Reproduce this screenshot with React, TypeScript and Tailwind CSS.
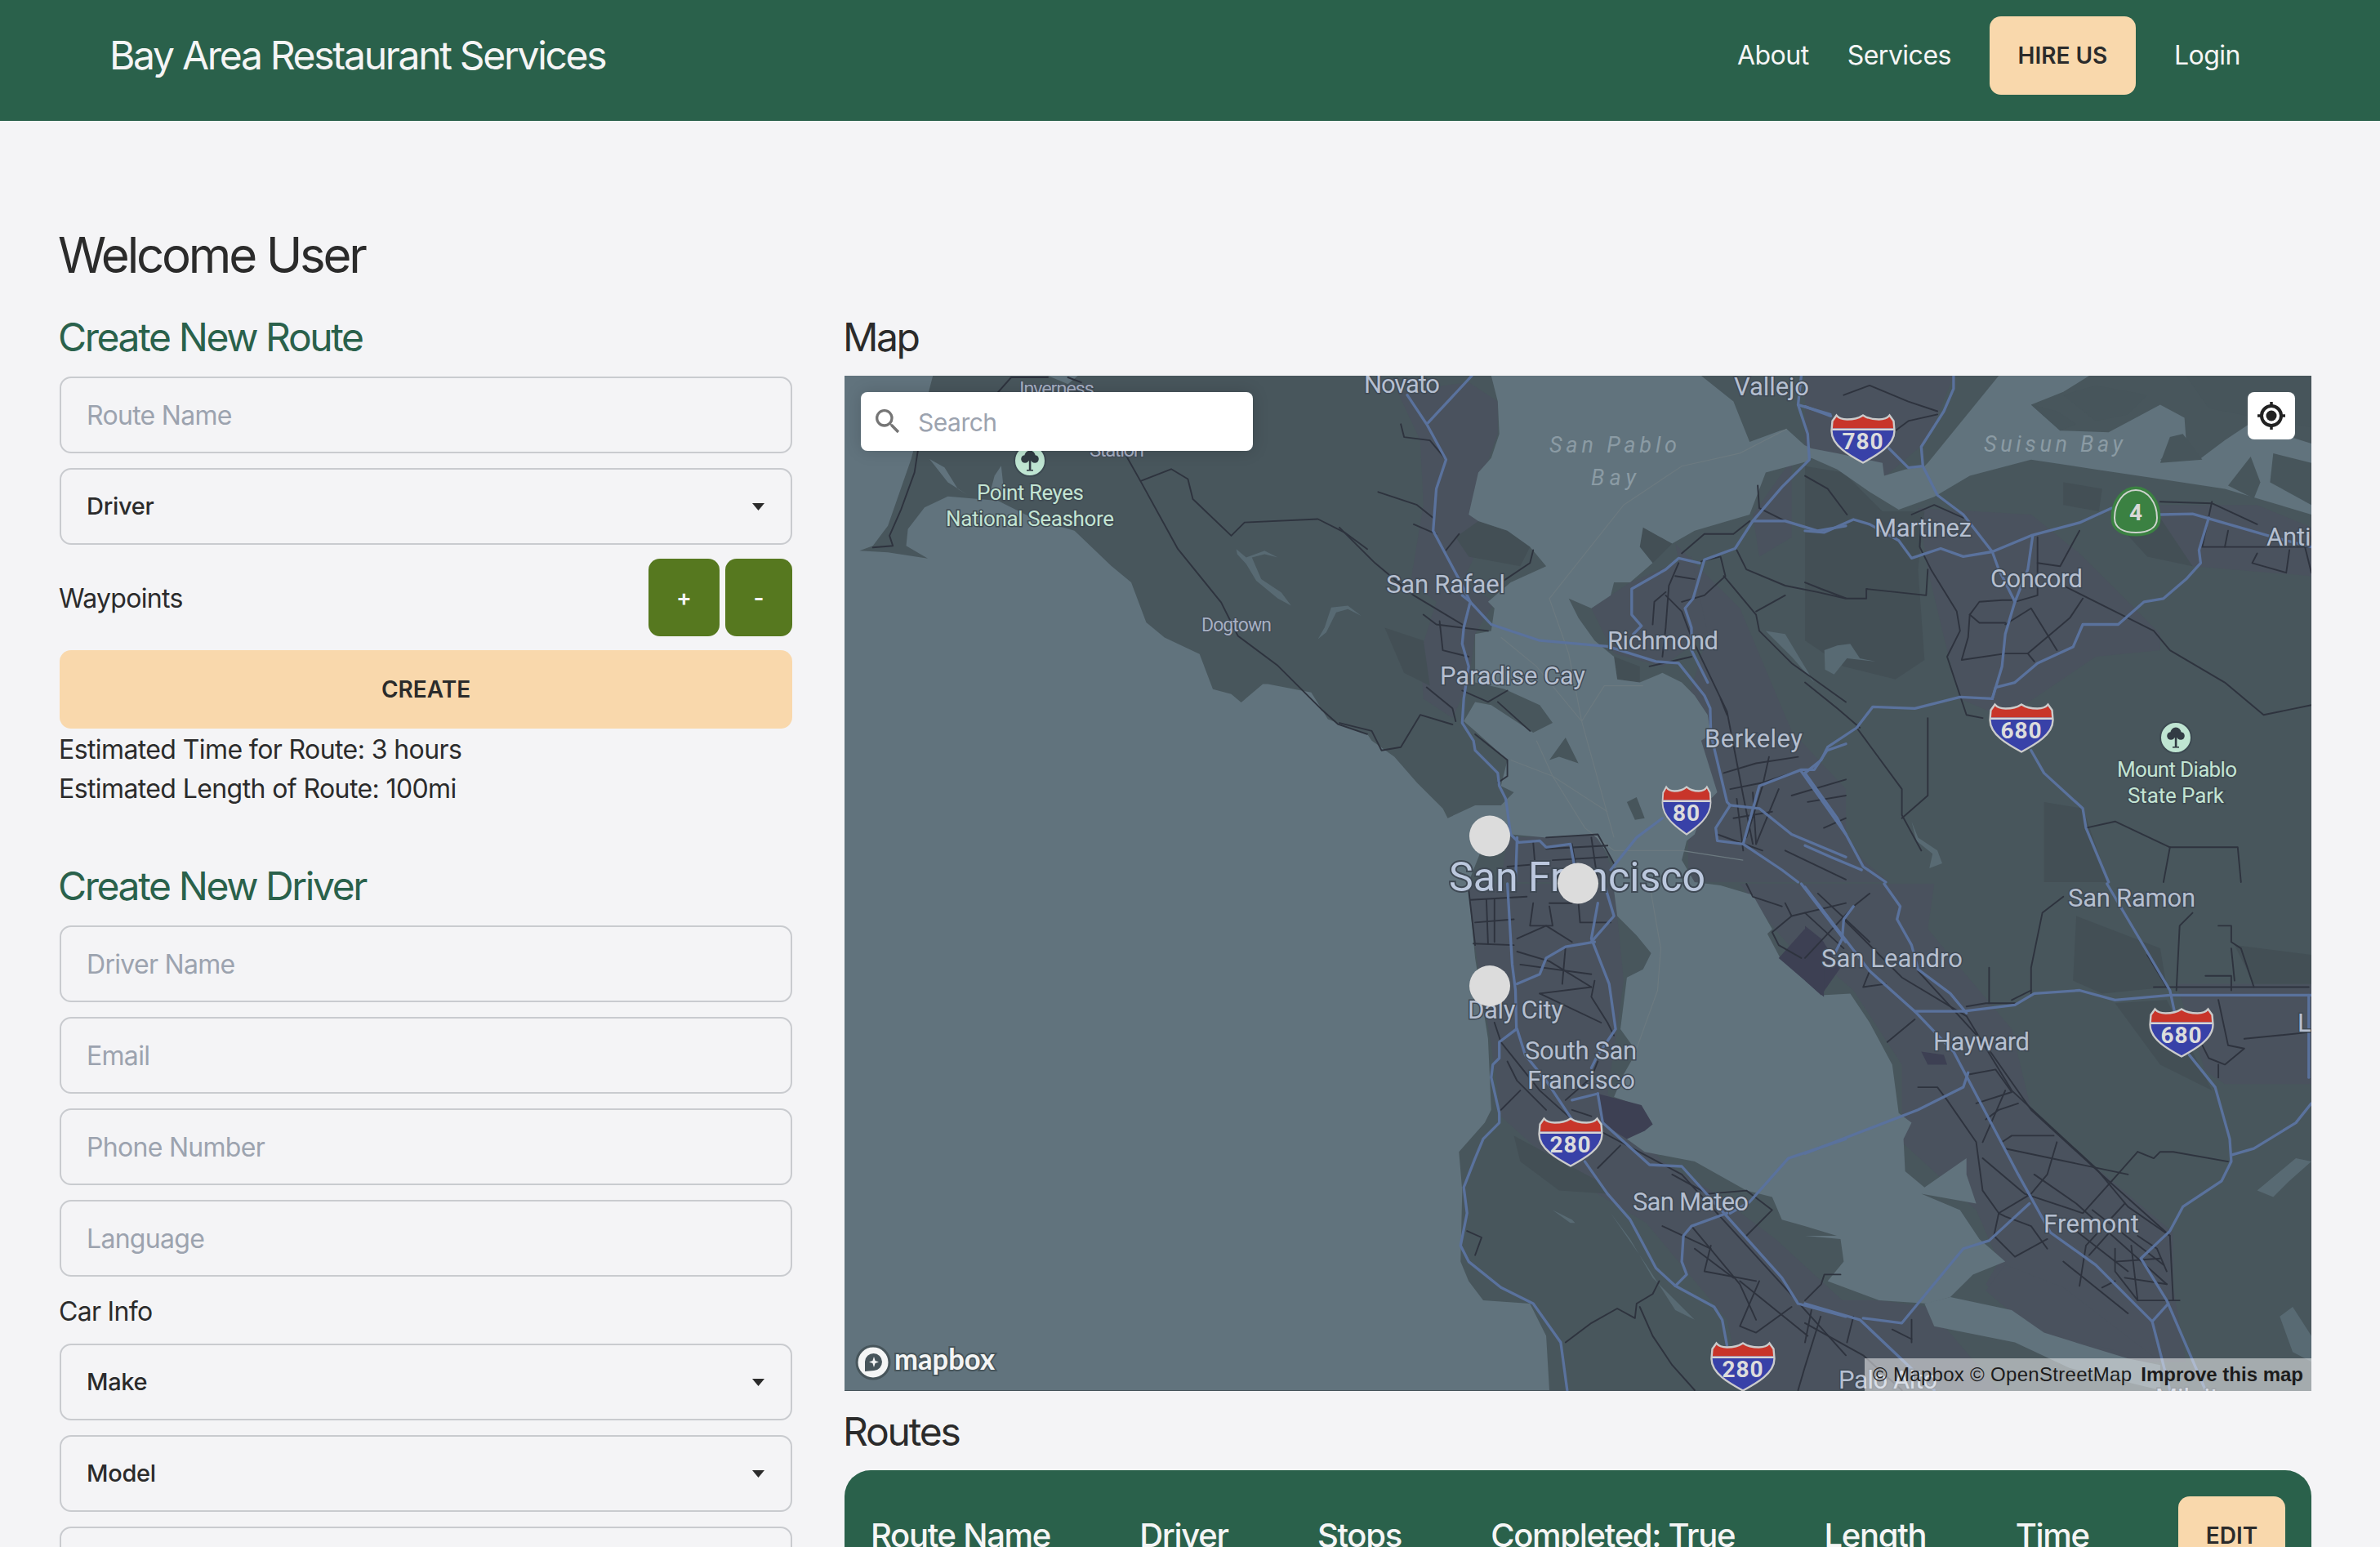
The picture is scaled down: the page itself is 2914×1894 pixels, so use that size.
import React from 'react'

type Pt = [number, number]

// map was traced from square crops, so each crop gets its own origin and scale
const crop = (ox: number, oy: number, s: number) => (n: number[]): Pt[] => {
  const out: Pt[] = []
  for (let i = 0; i < n.length; i += 2) out.push([ox + n[i] * s, oy + n[i + 1] * s])
  return out
}
const Z7 = crop(1034, 460, 640 / 1568)
const Z8 = crop(1640, 460, 620 / 1568)
const Z9 = crop(2210, 460, 620 / 1568)
const Z10 = crop(1640, 1082, 620 / 1568)
const Z11 = crop(2210, 1082, 620 / 1568)

const line = (pts: Pt[]) => 'M' + pts.map((p) => p[0].toFixed(1) + ' ' + p[1].toFixed(1)).join('L')
const shape = (pts: Pt[]) => line(pts) + 'Z'

const waterMain: Pt[] = [
  [1034, 1702],
  [1034, 460],
  ...Z7([265, 0, 200, 250, 130, 450, 85, 510, 45, 525, 130, 530, 250, 548, 185, 510, 190, 460, 240, 395, 310, 362, 460, 375, 570, 430, 690, 465, 800, 570, 860, 620, 905, 740, 960, 785, 1065, 835, 1105, 940, 1160, 955, 1190, 980, 1255, 925, 1270, 925, 1400, 950, 1450, 1030, 1568, 1075]),
  ...Z8([100, 1130, 170, 1180, 240, 1260, 320, 1340, 335, 1370, 420, 1330, 500, 1330, 540, 1290, 500, 1270, 520, 1190, 420, 1100, 385, 1070, 420, 1010, 470, 1020, 600, 1105, 660, 1075, 620, 1020, 510, 970, 420, 950, 420, 800, 470, 790, 480, 720, 460, 700, 530, 640, 640, 590, 590, 530, 520, 480, 430, 450, 400, 430, 430, 300, 470, 255, 495, 180, 490, 80, 470, 0, 1120, 0, 1220, 80, 1270, 205, 1365, 170, 1385, 165, 1440, 215]),
  ...Z9([20, 225, 100, 240, 240, 270, 245, 310, 310, 290, 370, 280, 380, 270, 600, 0, 880, 0, 800, 50, 700, 90, 790, 170, 940, 175, 1100, 90, 1175, 130, 1180, 200, 1100, 260, 1220, 260, 1300, 200, 1375, 150, 1568, 210, 1568, 430, 1300, 350, 1100, 320, 900, 290, 700, 260, 510, 310, 400, 375, 290, 415, 200, 360, 100, 290, 20, 255]),
  ...Z8([1450, 265, 1320, 300, 1270, 430, 1100, 480, 1030, 520, 940, 470, 930, 530, 970, 580, 900, 640, 850, 640, 840, 680, 780, 720, 710, 690, 740, 750, 790, 820, 850, 870, 860, 940, 930, 950, 1000, 920, 1060, 950, 1100, 990, 1140, 1050, 1150, 1110, 1120, 1130, 1170, 1290, 1130, 1330, 1100, 1420, 1075, 1440, 1060, 1500, 1100, 1568]),
  ...Z10([1180, 5, 1280, 35, 1340, 140, 1325, 155, 1365, 230, 1500, 350]),
  ...Z11([50, 345, 140, 340, 200, 430, 270, 560, 290, 710, 330, 740, 305, 790, 310, 890, 370, 940, 500, 850, 500, 900, 530, 990, 360, 960, 480, 1010, 540, 1100, 620, 1170, 520, 1210, 450, 1280, 380, 1300, 230, 1290, 70, 1230, 120, 1170, 110, 1100, 0, 1090]),
  ...Z10([1540, 1090, 1440, 1060, 1370, 1040, 1340, 970, 1260, 950, 1100, 860, 945, 830, 890, 790, 970, 745, 935, 690, 850, 660, 880, 590, 920, 520, 870, 450, 890, 290, 940, 265, 965, 215, 920, 160, 860, 100, 850, 20]),
  ...Z8([850, 1510, 790, 1420, 640, 1430, 530, 1420]),
  [1812, 1045],
  [1800, 1075],
  ...Z10([400, 20, 420, 230, 460, 480, 470, 700, 450, 740, 370, 830, 380, 950, 375, 1170, 400, 1230, 445, 1290, 590, 1300, 640, 1400, 650, 1568]),
]

const urban: Pt[][] = [
  Z8([180, 50, 400, 20, 490, 80, 490, 180, 400, 430, 460, 470, 380, 640, 480, 700, 420, 800, 400, 950, 350, 1060, 260, 1000, 250, 860, 300, 700, 220, 640, 260, 400, 250, 200]),
  Z8([1080, 1000, 1140, 800, 1060, 620, 1040, 520, 1240, 720, 1400, 1100, 1568, 1280, 1568, 1568, 1080, 1568]),
  Z8([900, 640, 1090, 560, 1140, 800, 1000, 900, 850, 860, 780, 720]),
  Z8([1280, 430, 1400, 260, 1400, 500, 1300, 560]),
  Z8([520, 1430, 800, 1420, 860, 1568, 500, 1568]),
  Z9([0, 0, 460, 0, 380, 200, 250, 310, 0, 230]),
  Z9([350, 410, 700, 430, 850, 550, 1100, 800, 1100, 850, 900, 870, 620, 1060, 480, 1000, 440, 850, 380, 600]),
  Z9([1090, 400, 1400, 400, 1568, 470, 1568, 620, 1200, 590, 1100, 460]),
  Z9([0, 1230, 180, 1500, 260, 1568, 0, 1568]),
  Z10([400, 0, 850, 0, 880, 300, 830, 650, 1000, 860, 1150, 950, 1350, 1100, 1568, 1300, 1568, 1568, 1250, 1568, 1200, 1350, 950, 1050, 700, 900, 500, 720, 470, 500, 420, 200]),
  Z10([1240, 0, 1568, 0, 1568, 250, 1400, 200, 1340, 130]),
  Z11([130, 0, 400, 0, 380, 140, 640, 450, 700, 700, 950, 920, 1140, 1080, 1140, 1250, 1180, 1480, 800, 1480, 560, 1240, 600, 1170, 530, 1010, 300, 800, 300, 560, 150, 330, 0, 200, 0, 0]),
  Z11([0, 1290, 230, 1290, 380, 1310, 600, 1568, 0, 1568]),
  Z11([1150, 310, 1568, 310, 1568, 620, 1300, 620, 1240, 580]),
  Z11([560, 1260, 620, 1180, 800, 1250, 1100, 1480, 700, 1380]),
]

// darker hill and park patches
const greens: Pt[][] = [
  Z8([430, 450, 520, 480, 590, 530, 560, 590, 400, 560, 360, 500]),
  Z8([940, 470, 1030, 520, 960, 590, 930, 530]),
  Z8([850, 870, 930, 900, 930, 950, 860, 940]),
  Z8([140, 780, 260, 820, 280, 960, 200, 920]),
  Z9([0, 280, 120, 300, 240, 420, 370, 420, 350, 600, 370, 880, 280, 940, 120, 900, 0, 820]),
  Z9([800, 330, 920, 350, 910, 420, 800, 400]),
  Z9([950, 440, 1100, 440, 1200, 590, 1060, 560]),
  Z11([840, 100, 1100, 200, 1120, 320, 920, 340, 830, 300]),
  Z11([960, 370, 1120, 360, 1260, 640, 1100, 560]),
  Z10([540, 780, 800, 920, 830, 960, 680, 950, 560, 860]),
  Z9([740, 1320, 860, 1340, 940, 1568, 740, 1568]),
  Z11([1330, 190, 1568, 220, 1568, 310, 1390, 310]),
]

const pale: Pt[][] = [
  Z7([1175, 520, 1205, 545, 1260, 525, 1300, 545, 1260, 535, 1222, 545, 1250, 610, 1310, 650, 1340, 690, 1300, 668, 1235, 615, 1205, 565, 1178, 535]),
  Z7([1420, 790, 1440, 755, 1460, 695, 1510, 690, 1550, 720, 1510, 700, 1475, 710, 1445, 770]),
  Z9([60, 850, 100, 835, 140, 830, 170, 875, 220, 885, 130, 875, 90, 925, 62, 910]),
  Z8([1320, 790, 1380, 800, 1470, 950, 1400, 870]),
  Z9([330, 1380, 350, 1430, 410, 1470, 425, 1510, 385, 1525, 395, 1480, 345, 1440]),
  Z10([840, 1020, 900, 1100, 970, 1220, 1100, 1350, 1040, 1320, 950, 1180]),
  Z10([660, 1010, 720, 1040, 730, 1050, 715, 1050]),
  Z11([1400, 950, 1520, 850, 1568, 860, 1500, 920, 1450, 970]),
  Z11([1470, 1340, 1510, 1310, 1568, 1400, 1568, 1480, 1510, 1450]),
]

// estero inlets and the wetland strip south of the bay, same colour as the bay
const inlets: Pt[][] = [
  Z7([255, 250, 300, 275, 340, 340, 370, 358, 310, 320]),
  Z7([470, 270, 450, 300, 438, 345, 480, 362]),
  Z7([610, 0, 670, 25, 700, 0]),
  Z11([370, 1300, 450, 1280, 640, 1320, 740, 1390, 1000, 1470, 1100, 1490, 1100, 1568, 820, 1500, 650, 1420, 400, 1370]),
]

// islands and marshes that sit on top of the water
const islands: Pt[][] = [
  Z8([890, 1320, 920, 1305, 945, 1370, 915, 1375]),
  Z8([650, 1190, 700, 1120, 740, 1200, 680, 1180]),
  Z9([1130, 190, 1170, 180, 1230, 260, 1100, 270]),
  Z9([1310, 340, 1380, 250, 1410, 330, 1390, 380]),
  Z9([1450, 240, 1568, 270, 1568, 400, 1440, 330]),
  Z9([700, 90, 780, 110, 840, 150, 790, 170]),
  Z9([800, 60, 900, 30, 1060, 60, 1000, 120, 900, 140]),
  Z9([1180, 0, 1568, 0, 1568, 160, 1400, 130, 1250, 100]),
]

const airports: Pt[][] = [
  Z10([800, 650, 935, 685, 970, 745, 945, 765, 890, 790, 810, 740]),
  Z11([0, 130, 50, 170, 110, 260, 50, 345, 0, 300]),
  Z10([1360, 230, 1440, 140, 1500, 180, 1500, 350]),
  Z11([360, 520, 430, 530, 440, 560, 380, 560]),
]

const highways: Pt[][] = [
  Z8([410, 0, 275, 145]),
  Z8([210, 60, 270, 150, 330, 260, 300, 350, 290, 480, 370, 630, 405, 700, 385, 780, 380, 830, 400, 900, 385, 1000, 380, 1075, 415, 1130, 420, 1160, 490, 1230, 495, 1270, 515, 1310, 530, 1420, 555, 1445, 620, 1440, 640, 1460, 715, 1450, 730, 1530]),
  Z8([380, 680, 405, 700, 470, 770, 620, 820, 830, 838, 980, 885, 1050, 890, 1130, 990, 1148, 1030, 1150, 1110, 1200, 1320, 1210, 1330]),
  Z8([1210, 1330, 1165, 1400, 1170, 1440, 1250, 1450, 1370, 1530, 1420, 1568]),
  Z8([1430, 0, 1420, 90, 1450, 180, 1455, 260, 1370, 345, 1280, 450, 1225, 535, 1130, 570, 1095, 690, 1070, 720, 1090, 780, 1090, 850, 1140, 950]),
  Z8([1420, 90, 1520, 120]),
  Z8([910, 800, 935, 775, 905, 740, 905, 660, 1010, 600, 1050, 565, 1115, 580]),
  Z8([1280, 450, 1380, 450, 1480, 480, 1568, 465]),
  Z8([1000, 1370, 920, 1430, 840, 1530]),
  Z8([1210, 1330, 1300, 1340, 1400, 1420, 1568, 1490]),
  Z8([1250, 1450, 1300, 1270, 1430, 1220, 1470, 1220, 1510, 1160, 1568, 1140]),
  Z8([1430, 1225, 1568, 1420]),
  Z8([550, 1430, 545, 1568]),
  Z9([460, 0, 460, 40, 430, 110, 360, 220, 365, 280, 410, 370, 490, 430, 580, 545, 600, 600, 650, 700, 620, 800, 610, 900, 580, 1000]),
  Z9([0, 95, 80, 125]),
  Z9([260, 225, 320, 285, 365, 280]),
  Z9([0, 480, 60, 485, 150, 445, 200, 460, 290, 510, 330, 565, 420, 535, 490, 560, 580, 545, 700, 495, 850, 455, 950, 410]),
  Z9([1100, 430, 1200, 428, 1450, 500, 1568, 530]),
  Z9([705, 495, 690, 600, 650, 700]),
  Z9([1250, 440, 1220, 540, 1225, 580, 1180, 630, 1110, 690, 1050, 700, 970, 770, 860, 770, 830, 840, 720, 890, 650, 950, 590, 965, 580, 1000]),
  Z9([580, 1000, 480, 995, 340, 1030, 210, 1025, 160, 1090, 70, 1150, 50, 1190, 0, 1230]),
  Z9([0, 1230, 100, 1370, 180, 1520, 250, 1568]),
  Z9([0, 1455, 80, 1490, 175, 1530]),
  Z9([700, 1160, 740, 1230, 860, 1340, 870, 1400, 940, 1568]),
  Z10([520, 0, 535, 250, 545, 330, 548, 450, 495, 490, 495, 540, 475, 560, 470, 600, 495, 710, 495, 740, 445, 790, 420, 850, 385, 940, 395, 1020, 375, 1120, 400, 1170, 500, 1250, 600, 1300, 685, 1420, 705, 1568]),
  Z10([820, 0, 850, 100, 780, 180]),
  Z10([800, 60, 780, 170, 835, 310, 855, 450, 800, 530, 780, 570]),
  Z10([790, 180, 700, 195, 640, 230, 620, 280, 550, 310]),
  Z10([550, 450, 575, 530, 640, 610, 720, 730]),
  Z10([760, 860, 830, 960, 900, 1040, 980, 1190, 1040, 1245, 1160, 1310, 1185, 1350, 1200, 1430]),
  Z10([800, 650, 720, 670]),
  Z10([800, 650, 815, 740, 960, 870, 1060, 875, 1200, 1030, 1370, 1220, 1420, 1300, 1568, 1340]),
  Z10([1200, 1020, 1090, 1060, 1065, 1090, 1060, 1170, 1075, 1210, 1040, 1245]),
  Z10([1568, 790, 1390, 850, 1270, 985, 1210, 1020]),
  Z10([1430, 0, 1568, 180]),
  Z11([0, 10, 200, 270, 340, 395, 460, 520, 660, 900, 760, 1080, 900, 1180, 1075, 1355, 1130, 1568]),
  Z11([245, 0, 295, 70, 285, 110, 330, 190, 350, 265, 450, 340, 500, 400]),
  Z11([150, 70, 120, 110, 115, 170, 90, 220]),
  Z11([340, 395, 490, 395, 650, 375, 710, 340, 850, 330, 960, 360, 1130, 345, 1568, 345]),
  Z11([935, 0, 1130, 330, 1145, 400]),
  Z11([1190, 530, 1270, 630, 1315, 790, 1320, 860, 1290, 920, 1170, 1000, 1130, 1075, 1040, 1160, 1120, 1290, 1240, 1568]),
  Z11([1320, 840, 1390, 820, 1520, 740, 1568, 680]),
  Z11([505, 585, 490, 630, 350, 700, 0, 835]),
  Z11([695, 990, 570, 1105, 490, 1130, 300, 1360, 180, 1345]),
  Z11([1075, 1355, 1125, 1300]),
  Z11([0, 1300, 170, 1350, 400, 1568]),
  Z11([1560, 345, 1560, 600]),
]

const roads: Pt[][] = [
  Z7([845, 240, 890, 320, 1000, 520, 1130, 680, 1180, 780, 1300, 870, 1430, 1000, 1480, 1045, 1568, 1075]),
  Z7([890, 315, 980, 280, 1030, 310, 1045, 370, 1160, 480, 1200, 440, 1420, 430, 1500, 470, 1568, 520]),
  Z7([220, 225, 210, 290, 170, 400, 135, 480, 145, 510, 85, 515]),
  Z7([460, 50, 500, 5, 610, 5]),
  Z7([670, 5, 710, 20]),
  Z8([0, 470, 60, 530, 110, 580, 230, 680, 380, 770]),
  Z8([0, 1075, 100, 1100, 130, 1160, 190, 1150, 250, 1050, 350, 1080]),
  Z8([190, 150, 200, 190, 280, 200, 330, 260]),
  Z8([120, 360, 240, 400, 290, 440]),
  Z8([230, 460, 300, 490]),
  Z8([330, 540, 370, 490]),
  Z8([260, 740, 300, 770, 460, 790]),
  Z8([310, 760, 320, 850, 400, 870]),
  Z8([270, 965, 350, 1030, 360, 1070]),
  Z8([380, 975, 460, 1010, 520, 975]),
  Z8([420, 1110, 520, 1190, 520, 1240, 490, 1260]),
  Z8([590, 1100, 490, 1010]),
  Z8([600, 540, 590, 580, 500, 640]),
  Z8([1060, 550, 1130, 490, 1220, 490, 1270, 450]),
  Z8([1050, 580, 1020, 650, 1010, 780, 1000, 870]),
  Z8([1120, 575, 1180, 560, 1195, 620, 1130, 680, 1060, 700]),
  Z8([1010, 680, 1060, 730, 1090, 810, 1200, 1040, 1250, 1300, 1280, 1450]),
  Z8([970, 770, 975, 700, 1010, 670]),
  Z8([1295, 340, 1300, 410, 1380, 450]),
  Z8([1230, 540, 1260, 600, 1380, 650, 1480, 670, 1568, 690]),
  Z8([1190, 620, 1290, 740, 1300, 790, 1400, 890, 1568, 1010]),
  Z8([1290, 730, 1380, 680]),
  Z8([1190, 1230, 1290, 1200, 1420, 1180]),
  Z8([1210, 1280, 1310, 1260, 1400, 1230]),
  Z8([1220, 1370, 1340, 1350]),
  Z8([1170, 1420, 1310, 1470]),
  Z8([1230, 1310, 1250, 1470]),
  Z8([1280, 1290, 1290, 1450]),
  Z8([1330, 1180, 1310, 1270, 1260, 1430]),
  Z8([1360, 1280, 1290, 1450]),
  Z8([1380, 1470, 1568, 1560]),
  Z8([640, 1430, 800, 1420, 850, 1510]),
  Z8([640, 1465, 830, 1455]),
  Z8([660, 1500, 830, 1490]),
  Z8([720, 1450, 740, 1568]),
  Z8([780, 1430, 800, 1568]),
  Z8([600, 1445, 610, 1568]),
  Z8([960, 900, 1090, 870]),
  Z8([1180, 1000, 1200, 1050]),
  Z8([520, 1520, 640, 1510]),
  Z8([1040, 620, 1100, 630]),
  Z8([1400, 1300, 1568, 1250]),
  Z8([1450, 1320, 1568, 1300]),
  Z8([1500, 1400, 1568, 1370]),
  Z10([405, 50, 580, 40]),
  Z10([455, 50, 460, 185]),
  Z10([415, 185, 540, 190]),
  Z10([480, 50, 480, 180]),
  Z10([420, 120, 540, 110]),
  Z10([650, 60, 720, 60]),
  Z10([560, 250, 780, 280]),
  Z10([700, 195, 690, 310]),
  Z10([650, 240, 780, 320]),
  Z10([600, 60, 590, 130, 660, 130, 650, 70]),
  Z10([550, 170, 640, 130, 720, 180]),
  Z10([740, 60, 745, 120, 840, 120]),
  Z10([400, 20, 420, 190]),
  Z10([550, 210, 650, 240]),
  Z10([790, 300, 780, 350, 830, 430, 850, 470]),
  Z10([620, 340, 780, 320]),
  Z10([620, 340, 810, 430]),
  Z10([480, 430, 500, 490, 620, 640, 720, 730]),
  Z10([520, 550, 550, 610, 640, 700]),
  Z10([500, 700, 560, 640]),
  Z10([800, 550, 780, 600, 700, 670]),
  Z10([720, 700, 780, 720]),
  Z10([815, 770, 1060, 900, 1370, 1240, 1568, 1460]),
  Z10([870, 810, 800, 880]),
  Z10([1030, 900, 1140, 960, 1260, 950, 1340, 1010, 1260, 1090]),
  Z10([1090, 1060, 1240, 1240, 1290, 1350]),
  Z10([1150, 1120, 1130, 1200, 1290, 1230]),
  Z10([1300, 1230, 1240, 1370, 1290, 1390, 1400, 1310]),
  Z10([1490, 1340, 1440, 1500, 1420, 1568]),
  Z10([395, 1075, 440, 1095, 420, 1150]),
  Z10([700, 1420, 780, 1360, 860, 1315, 915, 1345, 920, 1300, 970, 1270, 990, 1230]),
  Z10([930, 1310, 970, 1400, 1030, 1490, 1100, 1568]),
  Z10([1260, 0, 1280, 40, 1370, 70]),
  Z10([1380, 60, 1400, 100, 1340, 150, 1360, 190, 1430, 230]),
  Z10([1000, 1060, 1150, 1130]),
  Z10([1100, 1130, 1220, 1220]),
  Z10([1240, 1230, 1450, 1400]),
  Z10([1400, 100, 1568, 60]),
  Z9([0, 310, 70, 350, 130, 430]),
  Z9([120, 60, 200, 30, 320, 80, 410, 110]),
  Z9([280, 170, 320, 140, 410, 120]),
  Z9([330, 430, 400, 400, 490, 440]),
  Z9([360, 440, 355, 530, 390, 600, 470, 730, 480, 790, 440, 870, 480, 990, 500, 1050, 550, 1060]),
  Z9([380, 600, 375, 680, 190, 660, 190, 690, 130, 690, 50, 660, 0, 640]),
  Z9([510, 740, 540, 700, 610, 695, 640, 695]),
  Z9([510, 740, 540, 765, 620, 765]),
  Z9([510, 740, 505, 810, 485, 880, 620, 860, 690, 860, 710, 885]),
  Z9([620, 770, 700, 720, 780, 850]),
  Z9([800, 650, 1080, 790, 1130, 850, 1300, 950, 1420, 1050, 1568, 1020]),
  Z9([650, 700, 720, 680, 720, 500]),
  Z9([860, 690, 820, 750, 690, 860]),
  Z9([720, 580, 790, 590, 850, 480]),
  Z9([1260, 390, 1230, 530, 1568, 530]),
  Z9([1310, 480, 1300, 530]),
  Z9([1400, 550, 1385, 580, 1490, 610, 1500, 540]),
  Z9([1548, 530, 1568, 610]),
  Z9([1100, 390, 1260, 395, 1400, 460]),
  Z9([160, 1090, 300, 1280, 300, 1360, 360, 1470]),
  Z9([0, 950, 100, 1030, 170, 1090]),
  Z9([380, 1060, 380, 1300, 300, 1370]),
  Z9([870, 1400, 960, 1380, 1130, 1460, 1340, 1460, 1350, 1568]),
  Z9([1130, 1460, 1110, 1568]),
  Z11([0, 230, 150, 70, 200, 30]),
  Z11([0, 90, 120, 200]),
  Z11([40, 30, 200, 180]),
  Z11([820, 1060, 1000, 1200]),
  Z11([890, 1010, 1110, 1180]),
  Z11([880, 1150, 960, 1060]),
  Z11([120, 110, 300, 290, 500, 410, 640, 640, 900, 880, 1000, 1000, 1130, 1090]),
  Z11([200, 270, 180, 320, 250, 310]),
  Z11([350, 270, 560, 500, 700, 700, 940, 920, 1130, 1090, 1140, 1290]),
  Z11([500, 380, 560, 370, 650, 370]),
  Z11([570, 260, 570, 370]),
  Z11([255, 490, 340, 420]),
  Z11([350, 630, 410, 630, 440, 670, 530, 800, 550, 950, 600, 1020, 620, 1030, 700, 1060, 750, 1130]),
  Z11([600, 1020, 585, 1090, 650, 1155, 750, 1100]),
  Z11([610, 800, 640, 780, 770, 780]),
  Z11([550, 800, 620, 640]),
  Z11([560, 730, 600, 700, 660, 680]),
  Z11([510, 590, 590, 575, 640, 645, 530, 680]),
  Z11([780, 800, 750, 900, 700, 960, 600, 1020]),
  Z11([620, 820, 1000, 900]),
  Z11([710, 900, 840, 990, 1120, 1240]),
  Z11([550, 850, 680, 960, 860, 1020, 950, 920]),
  Z11([990, 990, 870, 1120, 850, 1245]),
  Z11([800, 1170, 1000, 1330]),
  Z11([920, 1250, 960, 1230]),
  Z11([960, 1130, 960, 1200, 1030, 1290, 1160, 1290]),
  Z11([1010, 1120, 1030, 1290]),
  Z11([960, 1170, 1100, 1160]),
  Z11([990, 1220, 1120, 1240]),
  Z11([1030, 1090, 1090, 1130, 1120, 1200]),
  Z11([0, 1290, 50, 1240, 60, 1210, 110, 1210]),
  Z11([20, 1320, 0, 1420]),
  Z11([0, 1360, 180, 1460, 300, 1568]),
  Z11([150, 1340, 130, 1420]),
  Z11([330, 1350, 330, 1420]),
  Z11([270, 1380, 330, 1410]),
  Z11([1080, 320, 1560, 320]),
  Z11([1240, 285, 1320, 285, 1320, 330]),
  Z11([1320, 200, 1330, 300]),
  Z11([1360, 480, 1560, 460]),
  Z11([1280, 360, 1310, 500, 1360, 510, 1300, 560, 1250, 540, 1230, 500]),
  Z11([1150, 330, 1160, 130, 1200, 90]),
  Z11([1120, 320, 1060, 220]),
  Z11([1280, 600, 1280, 560]),
  Z11([700, 340, 700, 260, 735, 90, 800, 40]),
  Z11([1030, 830, 1080, 850, 1100, 830, 1140, 830, 1310, 860]),
  Z11([950, 920, 1030, 830]),
  Z11([640, 360, 700, 330]),
  Z11([1390, 320, 1350, 200, 1320, 180, 1320, 130, 1280, 130]),
]

// faint ferry lines across the bay
const ferries: Pt[][] = [
  Z8([1385, 165, 1240, 240, 1060, 280, 880, 400, 650, 690, 710, 860, 750, 1070, 850, 1430]),
  Z8([500, 810, 610, 900, 750, 1070, 820, 960, 940, 960]),
  Z8([530, 1190, 660, 1240, 830, 1350]),
  Z8([610, 1130, 660, 1240, 760, 1400, 850, 1470, 1060, 1470, 1250, 1500]),
  Z10([960, 0, 995, 200, 985, 330, 920, 510]),
]

type Label = [string, number, number, number, number, 'city' | 'park' | 'bay' | 'minor' | 'big']
const labels: Label[] = [
  ['Novato', 1670, 481, 93, 31, 'city'],
  ['Vallejo', 2123, 484, 92, 31, 'city'],
  ['San Pablo', 1897, 554, 156, 27, 'bay'],
  ['Bay', 1948, 594, 55, 27, 'bay'],
  ['Suisun Bay', 2429, 553, 170, 27, 'bay'],
  ['San Rafael', 1697, 726, 146, 31, 'city'],
  ['Richmond', 1968, 795, 136, 31, 'city'],
  ['Paradise Cay', 1763, 838, 178, 31, 'city'],
  ['Berkeley', 2087, 915, 120, 31, 'city'],
  ['San Francisco', 1774, 1091, 314, 50, 'big'],
  ['Inverness', 1248, 484, 92, 24, 'minor'],
  ['Station', 1334, 559, 67, 24, 'minor'],
  ['Dogtown', 1471, 773, 86, 23, 'minor'],
  ['Point Reyes', 1196, 612, 131, 26, 'park'],
  ['National Seashore', 1158, 644, 206, 26, 'park'],
  ['Martinez', 2295, 657, 119, 31, 'city'],
  ['Concord', 2437, 719, 113, 31, 'city'],
  ['Antioch', 2775, 668, 105, 31, 'city'],
  ['Mount Diablo', 2592, 951, 147, 26, 'park'],
  ['State Park', 2605, 983, 118, 26, 'park'],
  ['San Ramon', 2532, 1110, 156, 31, 'city'],
  ['San Leandro', 2230, 1184, 173, 31, 'city'],
  ['Hayward', 2367, 1286, 118, 31, 'city'],
  ['Fremont', 2502, 1509, 117, 31, 'city'],
  ['Livermore', 2813, 1263, 150, 31, 'city'],
  ['Daly City', 1797, 1247, 117, 31, 'city'],
  ['South San', 1867, 1297, 137, 31, 'city'],
  ['Francisco', 1870, 1333, 132, 31, 'city'],
  ['San Mateo', 1999, 1482, 142, 31, 'city'],
  ['Palo Alto', 2251, 1700, 121, 31, 'city'],
  ['Milpitas', 2639, 1722, 110, 31, 'city'],
]

const labelStyle = {
  city: 'fill-[#b5bfd0] stroke-[#3f4954] [stroke-width:3px] [paint-order:stroke]',
  big: 'fill-[#bcc8de] stroke-[#3f4954] [stroke-width:4px] [paint-order:stroke]',
  minor: 'fill-[#a6afc2] stroke-[#3f4954] [stroke-width:2px] [paint-order:stroke]',
  park: 'fill-[#c3e4d3] stroke-[#3f4a52] [stroke-width:3px] [paint-order:stroke]',
  bay: 'fill-[#8b9ba4] italic',
}

const shieldPath =
  'M6 1Q10 6 19 6Q31 6 38.5 1Q46 6 58 6Q67 6 71 1L76 8L77 20C77 38 55 50 38.5 59C22 50 0 38 0 20L1 8Z'

function Shield({ cx, cy, label, w = 77 }: { cx: number; cy: number; label: string; w?: number }) {
  return (
    <g>
      <g transform={`translate(${cx - w / 2} ${cy - 29.5}) scale(${w / 77} 1)`}>
        <path d={shieldPath} fill="#3841a8" />
        <g clipPath="url(#shieldClip)">
          <rect x="0" y="0" width="77" height="17" fill="#c8352a" />
          <rect x="0" y="17" width="77" height="2.5" fill="#d6d6d6" />
        </g>
        <path d={shieldPath} fill="none" stroke="#cbcbcb" strokeWidth="2.4" />
      </g>
      <text
        x={cx}
        y={cy + 13}
        textAnchor="middle"
        className="fill-[#dcdcdc] text-[28px] font-bold tracking-[1px] [font-family:Roboto,sans-serif]"
      >
        {label}
      </text>
    </g>
  )
}

function ParkPin({ cx, cy }: { cx: number; cy: number }) {
  return (
    <g>
      <circle cx={cx} cy={cy} r="19" fill="#bfe5d2" stroke="#3d4a52" strokeWidth="2" />
      <rect x={cx - 1.2} y={cy - 2} width="2.6" height="14" fill="#323c44" />
      <rect x={cx - 4} y={cy + 11} width="8" height="1.6" fill="#323c44" />
      <circle cx={cx} cy={cy - 6} r="6.5" fill="#323c44" />
      <circle cx={cx - 6} cy={cy - 2} r="4.8" fill="#323c44" />
      <circle cx={cx + 6} cy={cy - 2} r="4.8" fill="#323c44" />
    </g>
  )
}

function MapDrawing() {
  return (
    <svg viewBox="1034 460 1796 1242.5" className="block h-full w-full" fill="none">
      <defs>
        <clipPath id="shieldClip">
          <path d={shieldPath} />
        </clipPath>
      </defs>
      <rect x="1034" y="460" width="1796" height="1243" fill="#48565c" />
      {urban.map((p, i) => (
        <path key={i} d={shape(p)} fill="#4a525e" />
      ))}
      {greens.map((p, i) => (
        <path key={i} d={shape(p)} fill="#434f55" />
      ))}
      <path d={shape(waterMain)} fill="#61737d" />
      {inlets.map((p, i) => (
        <path key={i} d={shape(p)} fill="#61737d" />
      ))}
      {pale.map((p, i) => (
        <path key={i} d={shape(p)} fill="#586a73" />
      ))}
      {islands.map((p, i) => (
        <path key={i} d={shape(p)} fill="#47555b" />
      ))}
      {airports.map((p, i) => (
        <path key={i} d={shape(p)} fill="#3d4053" />
      ))}
      {ferries.map((p, i) => (
        <path key={i} d={line(p)} stroke="#6c7a80" strokeWidth="1.2" />
      ))}
      <g stroke="#2e333e" strokeWidth="1.9" strokeLinejoin="round" strokeLinecap="round">
        {roads.map((p, i) => (
          <path key={i} d={line(p)} />
        ))}
      </g>
      <g stroke="#5a729d" strokeWidth="3.3" strokeLinejoin="round" strokeLinecap="round">
        {highways.map((p, i) => (
          <path key={i} d={line(p)} />
        ))}
      </g>
      {labels.map(([text, x, y, w, size, kind]) => (
        <text
          key={text}
          x={x}
          y={y}
          textLength={w}
          lengthAdjust="spacing"
          fontSize={size}
          className={`[font-family:Roboto,sans-serif] ${labelStyle[kind]}`}
        >
          {text}
        </text>
      ))}
      <ParkPin cx={1261} cy={564} />
      <ParkPin cx={2664} cy={903} />
      <Shield cx={2281} cy={537} label="780" />
      <Shield cx={2475} cy={891} label="680" />
      <Shield cx={2671} cy={1264} label="680" />
      <Shield cx={2065} cy={992} label="80" w={59} />
      <Shield cx={1923} cy={1398} label="280" />
      <Shield cx={2134} cy={1673} label="280" />
      <path
        d="M2615 597C2632 597 2644 614 2644 634C2644 650 2630 655 2615 655C2600 655 2586 650 2586 634C2586 614 2598 597 2615 597Z"
        fill="#3b8142"
        stroke="#3b8142"
        strokeWidth="3"
      />
      <path
        d="M2615 600C2630 600 2641 616 2641 634C2641 648 2628 652 2615 652C2602 652 2589 648 2589 634C2589 616 2600 600 2615 600Z"
        stroke="#cfd3cf"
        strokeWidth="2"
      />
      <text x="2615" y="637" textAnchor="middle" className="fill-[#d8d8d8] text-[28px] font-bold [font-family:Roboto,sans-serif]">
        4
      </text>
      <circle cx="1824" cy="1023.5" r="25" fill="#dcdcdc" />
      <circle cx="1932" cy="1081.5" r="25" fill="#dcdcdc" />
      <circle cx="1824" cy="1207" r="25" fill="#dcdcdc" />
      <circle cx="1069" cy="1668" r="20" fill="#f4f5f5" stroke="#47555b" strokeWidth="3" />
      <path d="M1059 1679L1059 1667A10.5 10.5 0 1 1 1070 1678Z" fill="#47555b" strokeLinejoin="round" />
      <path d="M1070 1661L1071.6 1666L1076 1667.5L1071.6 1669L1070 1674L1068.4 1669L1064 1667.5L1068.4 1666Z" fill="#f4f5f5" />
      <text
        x="1095"
        y="1677"
        textLength="123"
        lengthAdjust="spacingAndGlyphs"
        className="fill-[#f4f5f5] stroke-[#47555b] text-[36px] font-bold [stroke-width:4px] [paint-order:stroke] [font-family:Lato,sans-serif]"
      >
        mapbox
      </text>
    </svg>
  )
}

function TextField({ placeholder }: { placeholder: string }) {
  return (
    <input
      placeholder={placeholder}
      className="h-[94px] w-full rounded-[14px] border-2 border-[#c9cbcf] bg-transparent px-[31px] text-[32px] tracking-[-0.7px] outline-none placeholder:text-[#9ca3af]"
    />
  )
}

function SelectField({ label }: { label: string }) {
  return (
    <div className="flex h-[94px] w-full items-center justify-between rounded-[14px] border-2 border-[#c9cbcf] pl-[31px] pr-[32px]">
      <span className="text-[29px] font-medium tracking-[-0.3px] text-[#2b2b2b]">{label}</span>
      <svg width="15" height="9" viewBox="0 0 15 9">
        <path d="M0 0H15L7.5 9Z" fill="#2b2b2b" />
      </svg>
    </div>
  )
}

const columns = ['Route Name', 'Driver', 'Stops', 'Completed: True', 'Length', 'Time']

export default function App() {
  return (
    <div className="h-[1894px] overflow-hidden bg-[#f4f4f6] text-[#2b2b2b] [font-family:Inter,sans-serif]">
      <header className="flex h-[148px] items-center justify-between bg-[#2a614b] pb-[12px] pl-[134px] pr-[171px]">
        <span className="text-[48px] tracking-[-2.3px] text-[#f5f5f5]">Bay Area Restaurant Services</span>
        <nav className="flex items-center gap-[47px] text-[32px] tracking-[-0.5px] text-[#f5f5f5]">
          <a>About</a>
          <a>Services</a>
          <button className="flex h-[96px] w-[179px] items-center justify-center rounded-[14px] bg-[#f9d8ac] text-[28px] font-semibold tracking-normal text-[#2b2b2b]">
            HIRE US
          </button>
          <a>Login</a>
        </nav>
      </header>

      <main className="px-[73px] pt-[128px]">
        <h1 className="ml-[-2px] text-[60px] leading-[72px] tracking-[-3.2px]">Welcome User</h1>
        <div className="mt-[37px] flex gap-[64px]">
          <section className="w-[897px] shrink-0">
            <h2 className="mb-[20px] ml-[-2px] text-[48px] leading-[56px] tracking-[-2.4px] text-[#2a614b]">Create New Route</h2>
            <div className="flex flex-col gap-[18px]">
              <TextField placeholder="Route Name" />
              <SelectField label="Driver" />
            </div>
            <div className="mt-[17px] flex h-[95px] items-center">
              <span className="ml-[-1px] flex-1 pt-[2px] text-[32px] tracking-[-0.7px]">Waypoints</span>
              <button className="h-[95px] w-[87px] rounded-[14px] bg-[#56781f] text-[28px] font-semibold text-[#f4f4f6]">+</button>
              <button className="ml-[7px] h-[95px] w-[82px] rounded-[14px] bg-[#56781f] text-[28px] font-semibold text-[#f4f4f6]">-</button>
            </div>
            <button className="mt-[17px] h-[96px] w-full rounded-[14px] bg-[#f9d8ac] text-[28px] font-semibold text-[#2b2b2b]">
              CREATE
            </button>
            <p className="ml-[-1px] mt-[2px] text-[32px] leading-[48px] tracking-[-0.6px]">Estimated Time for Route: 3 hours</p>
            <p className="ml-[-1px] text-[32px] leading-[48px] tracking-[-0.6px]">Estimated Length of Route: 100mi</p>

            <h2 className="mb-[20px] ml-[-2px] mt-[67px] text-[48px] leading-[56px] tracking-[-2.4px] text-[#2a614b]">Create New Driver</h2>
            <div className="flex flex-col gap-[18px]">
              <TextField placeholder="Driver Name" />
              <TextField placeholder="Email" />
              <TextField placeholder="Phone Number" />
              <TextField placeholder="Language" />
            </div>
            <p className="mb-[15px] ml-[-1px] mt-[19px] text-[32px] leading-[48px] tracking-[-0.7px]">Car Info</p>
            <div className="flex flex-col gap-[18px]">
              <SelectField label="Make" />
              <SelectField label="Model" />
              <SelectField label="Year" />
            </div>
          </section>

          <section className="w-[1796px] shrink-0">
            <h2 className="mb-[19px] ml-[-2px] text-[48px] leading-[56px] tracking-[-2.4px]">Map</h2>
            <div className="relative h-[1242.5px] w-full overflow-hidden">
              <MapDrawing />
              <div className="absolute left-[20px] top-[20px] flex h-[72px] w-[480px] items-center gap-[17px] rounded-[8px] bg-white pl-[13px] shadow-[0_0_20px_rgba(0,0,0,0.15)]">
                <svg width="40" height="40" viewBox="0 0 24 24" fill="#757575">
                  <path d="M15.5 14h-.79l-.28-.27A6.471 6.471 0 0 0 16 9.5 6.5 6.5 0 1 0 9.5 16c1.61 0 3.09-.59 4.23-1.57l.27.28v.79l5 4.99L20.49 19l-4.99-5zm-6 0C7.01 14 5 11.99 5 9.5S7.01 5 9.5 5 14 7.01 14 9.5 11.99 14 9.5 14z" />
                </svg>
                <span className="pt-[2px] text-[30px] tracking-[-0.5px] text-[#9ca3af]">Search</span>
              </div>
              <div className="absolute right-[20px] top-[20px] flex h-[58px] w-[58px] items-center justify-center rounded-[8px] bg-white">
                <svg width="38" height="38" viewBox="0 0 38 38" fill="none">
                  <circle cx="19" cy="19" r="12" stroke="#222" strokeWidth="4" />
                  <circle cx="19" cy="19" r="6.5" fill="#222" />
                  <path d="M19 2V7M19 31V36M2 19H7M31 19H36" stroke="#222" strokeWidth="3.5" />
                </svg>
              </div>
              <div className="absolute bottom-0 right-0 flex h-[40px] w-[547px] items-center justify-between bg-white/50 pl-[10px] pr-[10px] text-[24px] text-[#1c1c1c] [font-family:'Liberation_Sans',sans-serif]">
                <span className="tracking-[0.3px]">© Mapbox © OpenStreetMap</span>
                <span className="font-bold">Improve this map</span>
              </div>
            </div>
            <h2 className="mb-[19px] ml-[-2px] mt-[22px] text-[48px] leading-[56px] tracking-[-2.2px]">Routes</h2>
            <div className="flex items-start justify-between rounded-[32px] bg-[#2a614b] px-[32px] pb-[32px] pt-[32px] text-[40px] font-medium tracking-[-1.3px] text-[#f5f5f5]">
              {columns.map((c) => (
                <span key={c} className="mt-[24px] leading-[48px]">
                  {c}
                </span>
              ))}
              <button className="h-[96px] w-[131px] rounded-[14px] bg-[#f9d8ac] text-[28px] font-semibold tracking-normal text-[#2b2b2b]">
                EDIT
              </button>
            </div>
          </section>
        </div>
      </main>
    </div>
  )
}
